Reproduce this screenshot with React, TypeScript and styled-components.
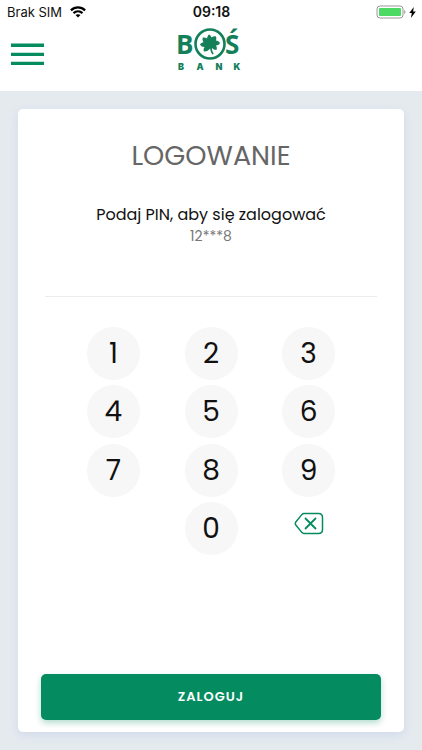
import React, { useState } from "react";
import styled, { createGlobalStyle } from "styled-components";

const GREEN = "#048b60";
const LOGO_GREEN = "#13805a";
const DISPLAY = `Poppins, Inter, "Open Sans", sans-serif`;

const GlobalStyle = createGlobalStyle`
  *, *::before, *::after { box-sizing: border-box; }
  body { margin: 0; background: #e5eaef; }
  button { border: 0; padding: 0; background: none; color: inherit; font: inherit; cursor: pointer; }
  h1, p { margin: 0; font-weight: 400; }
`;

const Page = styled.div`
  min-height: 100vh;
  display: flex;
  flex-direction: column;
  font-family: ${DISPLAY};
  color: #111;
`;

const Header = styled.header`
  background: #fff;
`;

const StatusBar = styled.div`
  display: grid;
  grid-template-columns: 1fr auto 1fr;
  align-items: center;
  height: 24px;
  padding: 0 6px 0 7px;
  font: 13px/24px Inter, sans-serif;
`;

const StatusGroup = styled.div<{ $end?: boolean }>`
  display: flex;
  align-items: center;
  justify-content: ${(p) => (p.$end ? "flex-end" : "flex-start")};
  gap: ${(p) => (p.$end ? 3 : 8)}px;
`;

const Clock = styled.time`
  font-size: 14px;
  font-weight: 600;
`;

const NavBar = styled.div`
  display: grid;
  grid-template-columns: 1fr auto 1fr;
  height: 67px;
  padding: 0 14px 0 11px;
`;

const MenuButton = styled.button`
  justify-self: start;
  align-self: start;
  margin-top: 19px;
  svg { display: block; }
`;

const Logo = styled.svg`
  display: block;
`;

const Main = styled.main`
  flex: 1;
  display: flex;
  padding: 18px;
`;

const Card = styled.form`
  flex: 1;
  min-width: 0;
  display: flex;
  flex-direction: column;
  padding: 28px 23px 12px;
  background: #fff;
  border-radius: 5px;
  box-shadow: 0 3px 8px rgba(150, 175, 225, 0.25);
`;

const Title = styled.h1`
  font-size: 27px;
  line-height: 38px;
  text-align: center;
  color: #666;
`;

const Prompt = styled.p`
  margin-top: 29px;
  font-size: 16px;
  line-height: 22px;
  text-align: center;
`;

const Account = styled.p`
  font-size: 14px;
  line-height: 20px;
  text-align: center;
  color: #777;
`;

const PinInput = styled.input`
  min-width: 0;
  height: 51px;
  margin: 0 4px;
  padding: 10px 0 0;
  border: 0;
  border-bottom: 1px solid #ececec;
  outline: 0;
  background: transparent;
  font: 24px ${DISPLAY};
  text-align: center;
  color: #111;
`;

const Keypad = styled.div`
  align-self: center;
  display: grid;
  grid-template-columns: repeat(3, 53px);
  grid-auto-rows: 53px;
  justify-content: space-between;
  align-content: space-between;
  width: 73%;
  height: 228px;
  margin-top: 30px;
`;

const Key = styled.button`
  border-radius: 50%;
  background: #f7f7f7;
  font-size: 28px;
  line-height: 53px;
  text-align: center;
`;

const ZeroKey = styled(Key)`
  grid-column: 2;
`;

const EraseKey = styled.button`
  display: flex;
  justify-content: center;
  align-items: flex-start;
  padding-top: 10px;
`;

const Submit = styled.button`
  height: 46px;
  margin-top: auto;
  border-radius: 5px;
  background: ${GREEN};
  color: #fff;
  font-size: 13px;
  font-weight: 600;
  letter-spacing: 1px;
  box-shadow: 0 3px 6px rgba(4, 139, 96, 0.3);
`;

const WifiIcon = () => (
  <svg width="16" height="12" viewBox="0 0 16 12" fill="none" stroke="#000" strokeWidth="2.2" aria-hidden="true">
    <path d="M.9 4.4C5 .4 11 .4 15.1 4.4" />
    <path d="M3.5 7.1C6.2 4.6 9.8 4.6 12.5 7.1" />
    <path d="M8 11.6 5.5 9.1C7 7.8 9 7.8 10.5 9.1Z" fill="#000" stroke="none" />
  </svg>
);

const BatteryIcon = () => (
  <svg width="30" height="14" viewBox="0 0 30 14" aria-hidden="true">
    <rect x="1" y="1" width="26" height="12" rx="3" fill="#fff" stroke="#999" />
    <rect x="3" y="3" width="22" height="8" rx="1" fill="#4cd964" />
    <path d="M28.3 5v4c1.5-.6 1.5-3.4 0-4Z" fill="#888" />
  </svg>
);

const BoltIcon = () => (
  <svg width="7" height="11" viewBox="0 0 7 11" aria-hidden="true">
    <path d="M4.8 0 .3 6h2.5L1.9 11 6.8 4.6H4.1Z" fill="#000" />
  </svg>
);

const EraseIcon = () => (
  <svg width="30" height="23" viewBox="0 0 30 23" fill="none" stroke={GREEN} strokeLinecap="round" strokeLinejoin="round" aria-hidden="true">
    <path d="M10 1.5H24.5Q28.5 1.5 28.5 5.5V17.5Q28.5 21.5 24.5 21.5H10Q8.8 21.5 8 20.6L1.8 13Q.8 11.5 1.8 10L8 2.4Q8.8 1.5 10 1.5Z" strokeWidth="1.5" />
    <path d="m11.5 6.5 10 10m0-10-10 10" strokeWidth="1.8" />
  </svg>
);

const BankLogo = () => (
  <Logo width="70" height="48" viewBox="0 0 70 48" fill={LOGO_GREEN} role="img" aria-label="BOŚ Bank">
    <g fontFamily="Open Sans, sans-serif" fontWeight="700" fontSize="26">
      <text x="1" y="30">B</text>
      <text x="50" y="30">Ś</text>
    </g>
    <circle cx="35" cy="20" r="14.5" fill="#fff" stroke={LOGO_GREEN} strokeWidth="2.6" />
    <path d="M34 10.500C35.500 11 36 12.500 36.500 13.500C38 12.500 39.500 12 41 12.500C41.500 14 41.300 15.500 41 16.500C42.500 16.500 44 17.500 45 19C44 20.800 42.500 21.500 41 21.500C42 23 42 24.500 41.500 26C39.500 26 38 25.200 37 24C36.800 26 37.500 28 38.800 29.500L37.500 30.500C35.800 28.500 35.300 26.500 35.200 24.500C33.500 26.500 31.500 27.800 29 27.500C28.300 26 28.500 24.500 29.500 23C27.500 23 25.800 22.200 25 20.500C26 19 27.300 18.500 28.500 18.200C27.500 16.800 27.300 15.200 27.800 13.500C29.500 13.200 31 13.600 32 14.500C32.300 13 32.800 11.500 34 10.500Z" />
    <g fontFamily="Inter, sans-serif" fontWeight="900" fontSize="9" textAnchor="middle">
      <text x="6" y="46">B</text>
      <text x="25" y="46">A</text>
      <text x="44" y="46">N</text>
      <text x="62" y="46">K</text>
    </g>
  </Logo>
);

export default function App() {
  const [pin, setPin] = useState("");

  return (
    <Page>
      <GlobalStyle />
      <Header>
        <StatusBar>
          <StatusGroup>
            <span>Brak SIM</span>
            <WifiIcon />
          </StatusGroup>
          <Clock>09:18</Clock>
          <StatusGroup $end>
            <BatteryIcon />
            <BoltIcon />
          </StatusGroup>
        </StatusBar>
        <NavBar>
          <MenuButton type="button" aria-label="Menu">
            <svg width="33" height="23" viewBox="0 0 33 23" stroke={GREEN} strokeWidth="3.4" aria-hidden="true">
              <path d="M0 2.3h33M0 11.4h33M0 20.4h33" />
            </svg>
          </MenuButton>
          <BankLogo />
        </NavBar>
      </Header>
      <Main>
        <Card onSubmit={(e) => e.preventDefault()}>
          <Title>LOGOWANIE</Title>
          <Prompt id="pin-prompt">Podaj PIN, aby się zalogować</Prompt>
          <Account>12***8</Account>
          <PinInput type="password" aria-labelledby="pin-prompt" value={pin} readOnly />
          <Keypad>
            {["1", "2", "3", "4", "5", "6", "7", "8", "9"].map((digit) => (
              <Key type="button" key={digit} onClick={() => setPin(pin + digit)}>
                {digit}
              </Key>
            ))}
            <ZeroKey type="button" onClick={() => setPin(pin + "0")}>
              0
            </ZeroKey>
            <EraseKey type="button" aria-label="Usuń" onClick={() => setPin(pin.slice(0, -1))}>
              <EraseIcon />
            </EraseKey>
          </Keypad>
          <Submit type="submit">ZALOGUJ</Submit>
        </Card>
      </Main>
    </Page>
  );
}
